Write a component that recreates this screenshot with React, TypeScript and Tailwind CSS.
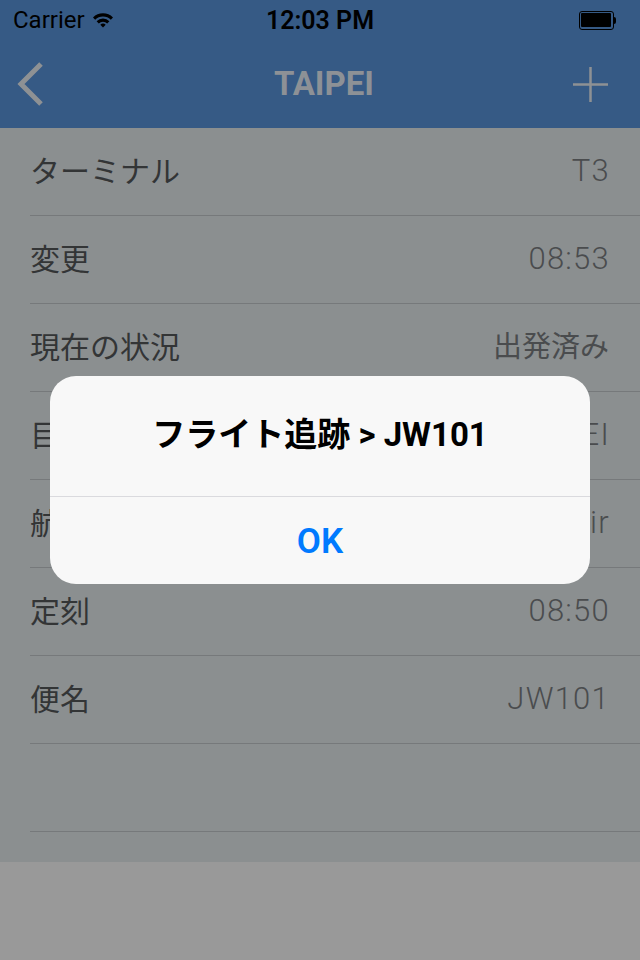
import React from "react";

const rows = [
  { label: "ターミナル", value: "T3", cjk: false },
  { label: "変更", value: "08:53", cjk: false },
  { label: "現在の状況", value: "出発済み", cjk: true },
  { label: "目的地", value: "TAIPEI", cjk: false },
  { label: "航空会社", value: "China Air", cjk: false },
  { label: "定刻", value: "08:50", cjk: false },
  { label: "便名", value: "JW101", cjk: false },
  { label: "", value: "", cjk: false },
];

const font = { fontFamily: '"Helvetica Neue", Roboto, "Noto Sans CJK JP", sans-serif' };

function StatusBar() {
  return (
    <div className="h-10 flex items-center justify-between px-[13px] text-black">
      <div className="flex items-center gap-[7px] w-[160px]">
        <span className="text-[24px] leading-none">Carrier</span>
        <svg width="22" height="16" viewBox="0 0 22 16">
          <path d="M1 5.5 A14 14 0 0 1 21 5.5 L18.8 7.8 A11 11 0 0 0 3.2 7.8 Z" fill="#000" />
          <path d="M4.6 9.2 A9 9 0 0 1 17.4 9.2 L15.2 11.4 A6 6 0 0 0 6.8 11.4 Z" fill="#000" />
          <path d="M8.3 12.8 A4 4 0 0 1 13.7 12.8 L11 15.6 Z" fill="#000" />
        </svg>
      </div>
      <span className="text-[25px] font-semibold leading-none">12:03 PM</span>
      <div className="w-[160px] flex justify-end items-center pr-[11px]">
        <div className="w-[35px] h-[19px] rounded-[3px] border-[1.5px] border-black p-[1.5px]">
          <div className="w-full h-full bg-black rounded-[1px]" />
        </div>
        <div className="w-[2px] h-[7px] bg-black rounded-r-sm" />
      </div>
    </div>
  );
}

function NavBar() {
  return (
    <div className="h-[88px] flex items-center justify-between pl-[16px] pr-[31px]">
      <svg width="30" height="44" viewBox="0 0 30 44">
        <path d="M25 2 L5 22 L25 42" stroke="#8e9194" strokeWidth="5" fill="none" />
      </svg>
      <span className="text-[33px] font-bold text-[#8d9196] pl-[30px]">TAIPEI</span>
      <svg width="37" height="37" viewBox="0 0 37 37">
        <path d="M18.5 1 V36 M1 18.5 H36" stroke="#8e9194" strokeWidth="2.5" />
      </svg>
    </div>
  );
}

export default function App() {
  return (
    <div className="relative w-[640px] h-[960px] bg-[#999999] overflow-hidden" style={font}>
      <div className="bg-[#365a85]">
        <StatusBar />
        <NavBar />
      </div>
      <div className="bg-[#8b8f90] pb-[30px]">
        {rows.map((r, i) => (
          <div key={i} className="pl-[30px]">
            <div className="h-[88px] flex items-center justify-between pr-[31px] border-b border-[#76797b]">
              <span className="text-[30px] text-[#333536]">{r.label}</span>
              {r.cjk ? (
                <span className="text-[29px] text-[#4a4c4e]">{r.value}</span>
              ) : (
                <span className="text-[31px] font-light tracking-[0.04em] -mr-[1px] text-[#4a4c4e]">{r.value}</span>
              )}
            </div>
          </div>
        ))}
      </div>

      {/* alert */}
      <div className="absolute inset-0">
        <div className="absolute left-[50px] top-[376px] w-[540px] h-[208px] rounded-[26px] bg-[#f8f8f8] flex flex-col">
          <div className="h-[120px] flex items-center justify-center pb-[2px]">
            <span className="text-[33px] font-bold text-black">フライト追跡 &gt; JW101</span>
          </div>
          <div className="h-px bg-[#dadade]" />
          <div className="flex-1 flex items-center justify-center pt-[4px]">
            <span className="text-[35px] font-semibold text-[#007aff]">OK</span>
          </div>
        </div>
      </div>
    </div>
  );
}
